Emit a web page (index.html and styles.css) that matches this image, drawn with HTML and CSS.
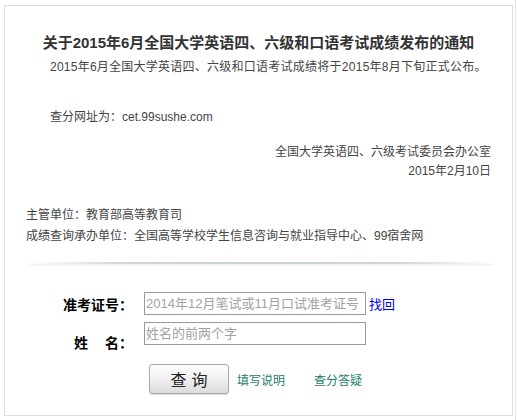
FILE: index.html
```html
<!DOCTYPE html>
<html lang="zh-CN">
<head>
<meta charset="utf-8">
<title>CET 查分</title>
<link rel="stylesheet" href="styles.css">
</head>
<body>
<div class="page">
  <div class="box">
    <h1 class="title">关于2015年6月全国大学英语四、六级和口语考试成绩发布的通知</h1>
    <p class="sub">2015年6月全国大学英语四、六级和口语考试成绩将于2015年8月下旬正式公布。</p>
    <p class="url">查分网址为：cet.99sushe.com</p>
    <div class="sign">
      <p>全国大学英语四、六级考试委员会办公室</p>
      <p>2015年2月10日</p>
    </div>
    <div class="org">
      <p>主管单位：教育部高等教育司</p>
      <p>成绩查询承办单位：全国高等学校学生信息咨询与就业指导中心、99宿舍网</p>
    </div>
    <div class="divider"></div>
    <form class="form">
      <div class="row">
        <label class="label">准考证号：</label>
        <input class="field" type="text" placeholder="2014年12月笔试或11月口试准考证号">
        <a class="find" href="#">找回</a>
      </div>
      <div class="row">
        <label class="label label-low"><span class="gap">姓</span>名：</label>
        <input class="field" type="text" placeholder="姓名的前两个字">
      </div>
      <div class="actions">
        <button class="btn" type="button">查询</button>
        <a class="link" href="#">填写说明</a>
        <a class="link" href="#">查分答疑</a>
      </div>
    </form>
  </div>
</div>
</body>
</html>
```

FILE: styles.css
```css
html, body {
  margin: 0;
  padding: 0;
  background: #fff;
}
body {
  font-family: "Liberation Sans", "Noto Sans CJK SC", sans-serif;
  color: #444;
  font-size: 12px;
}
.page {
  width: 516px;
  height: 420px;
  border-right: 1px solid #e4e4e4;
  padding: 5px 0 0 4px;
  box-sizing: border-box;
}
.box {
  width: 509px;
  height: 411px;
  border: 1px solid #dedede;
  box-sizing: border-box;
  padding-top: 27px;
}
p { margin: 0; }
.title {
  margin: 0;
  text-align: center;
  font-size: 15px;
  line-height: 20px;
  font-weight: bold;
  color: #333;
}
.sub {
  margin-top: 4px;
  padding-left: 45px;
  line-height: 20px;
  font-size: 12px;
  letter-spacing: 0.25px;
}
.url {
  margin-top: 30px;
  padding-left: 45px;
  line-height: 20px;
}
.sign {
  margin-top: 16px;
  text-align: right;
  padding-right: 21px;
  line-height: 19px;
}
.org {
  margin-top: 24px;
  padding-left: 21px;
  line-height: 21px;
}
.divider {
  margin: 15px 18px 0 25px;
  height: 2px;
  background: linear-gradient(to right, rgba(200,210,212,0), #cdd7d9 20%, #c9d4d6 50%, #cdd7d9 80%, rgba(200,210,212,0));
  box-shadow: 0 1px 2px rgba(180,190,192,0.3);
}
.form {
  margin: 28px 0 0 0;
}
.row {
  display: flex;
  align-items: center;
  height: 23px;
  margin-bottom: 7px;
}
.label {
  width: 128px;
  text-align: right;
  font-size: 14px;
  font-weight: bold;
  color: #000;
  margin-right: 11px;
  font-family: "Noto Sans CJK SC", sans-serif;
}
.label-low {
  position: relative;
  top: 8px;
}
.gap {
  margin-right: 17px;
}
.field {
  width: 222px;
  height: 23px;
  box-sizing: border-box;
  border: 1px solid #9a9a9a;
  padding: 0 1px;
  margin: 0;
  font-family: "Liberation Sans", "Noto Sans CJK SC", sans-serif;
  font-size: 13px;
  color: #333;
  outline: none;
}
.field::placeholder {
  color: #a2a2a2;
}
.find {
  margin-left: 3px;
  font-size: 13px;
  color: #0000ee;
  text-decoration: none;
}
.actions {
  display: flex;
  align-items: center;
  margin-top: 19px;
  padding-left: 144px;
}
.btn {
  width: 80px;
  height: 30px;
  border: 1px solid #a9a9a9;
  border-radius: 3px;
  background: linear-gradient(#fdfdfd, #f0f0f0 50%, #dcdcdc);
  box-shadow: 0 1px 1px rgba(0,0,0,0.15);
  font-family: "Noto Sans CJK SC", sans-serif;
  font-size: 16px;
  letter-spacing: 5px;
  padding: 0 0 0 5px;
  color: #222;
}
.link {
  margin-left: 8px;
  margin-right: 21px;
  font-size: 12px;
  color: #1e7b70;
  text-decoration: none;
}
```
